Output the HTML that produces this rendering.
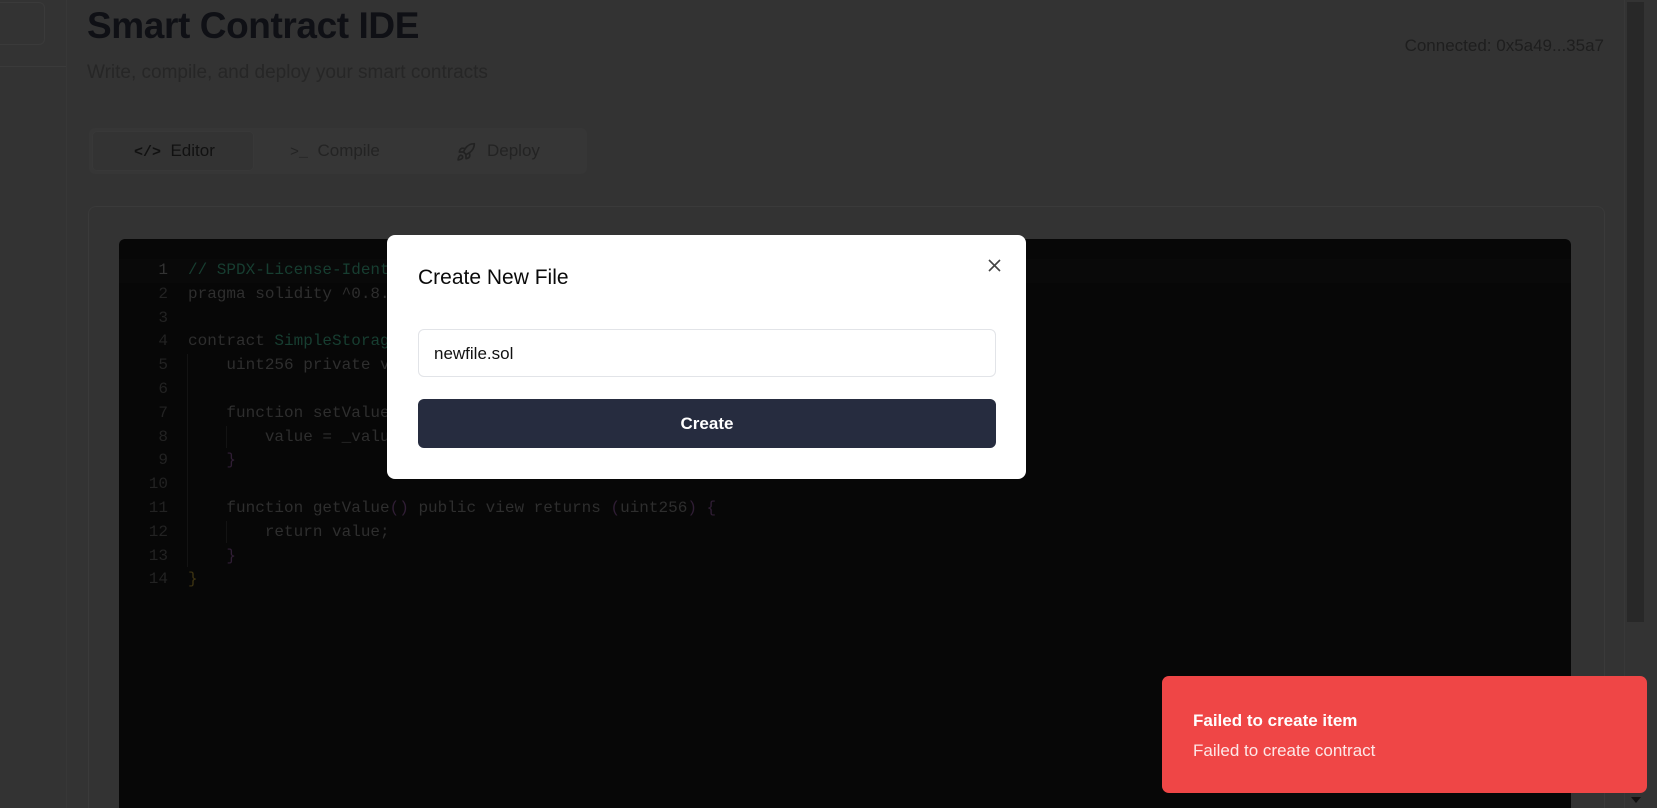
<!DOCTYPE html>
<html><head><meta charset="utf-8"><style>
*{box-sizing:border-box;margin:0;padding:0}
html,body{width:1657px;height:808px;overflow:hidden;background:#333;font-family:"Liberation Sans",sans-serif}
#w{position:relative;width:1657px;height:808px;overflow:hidden;background:#333}
.abs{position:absolute}
.code{font-family:"Liberation Mono",monospace;font-size:16px;line-height:23.8px;white-space:pre}
</style></head><body><div id="w">
<!-- sidebar -->
<div class="abs" style="left:0;top:2px;width:45px;height:43px;border:1px solid #3a3a3a;border-left:none;border-radius:0 6px 6px 0"></div>
<div class="abs" style="left:0;top:66px;width:66px;height:1px;background:#3a3a3a"></div>
<div class="abs" style="left:66px;top:0;width:1px;height:808px;background:#373737"></div>

<div class="abs" style="left:87px;top:5px;font-size:37px;font-weight:bold;color:#0f1015;letter-spacing:-0.4px">Smart Contract IDE</div>
<div class="abs" style="left:87px;top:62px;font-size:19px;color:#262626">Write, compile, and deploy your smart contracts</div>
<div class="abs" style="right:53px;top:36px;font-size:17px;color:#1e1e1e">Connected: 0x5a49...35a7</div>

<!-- tabs -->
<div class="abs" style="left:89px;top:128px;width:498px;height:46px;background:#363636;border-radius:6px"></div>
<div class="abs" style="left:92px;top:131px;width:162px;height:40px;background:#333;border-radius:5px;border:1px solid #383838"></div>
<div class="abs" style="left:134px;top:141px;font-size:17px;color:#111"><span style="font-family:'Liberation Mono';font-size:15px;font-weight:bold">&lt;/&gt;</span>&nbsp; Editor</div>
<div class="abs" style="left:290px;top:141px;font-size:17px;color:#232323"><span style="font-family:'Liberation Mono';font-size:15px">&gt;_</span>&nbsp; Compile</div>
<svg class="abs" style="left:456px;top:142px" width="20" height="20" viewBox="0 0 24 24" fill="none" stroke="#222" stroke-width="2" stroke-linecap="round" stroke-linejoin="round"><path d="M4.5 16.5c-1.5 1.26-2 5-2 5s3.74-.5 5-2c.71-.84.7-2.13-.09-2.91a2.180 2.18 0 0 0-2.91-.09z"/><path d="M12 15l-3-3a22 22 0 0 1 2-3.95A12.88 12.88 0 0 1 22 2c0 2.72-.78 7.5-6 11a22.35 22.35 0 0 1-4 2z"/><path d="M9 12H4s.55-3.030 2-4c1.62-1.08 5 0 5 0M12 15v5s3.03-.55 4-2c1.08-1.62 0-5 0-5"/></svg>
<div class="abs" style="left:487px;top:141px;font-size:17px;color:#232323">Deploy</div>

<!-- card -->
<div class="abs" style="left:88px;top:206px;width:1517px;height:602px;border:1px solid #3a3a3a;border-bottom:none;border-radius:8px 8px 0 0"></div>
<div class="abs" style="left:119px;top:239px;width:1452px;height:569px;background:#070707;border-radius:6px 6px 0 0"></div>
<div class="abs" style="left:119px;top:259px;width:1452px;height:24px;background:#090909"></div>
<div class="abs" style="left:187px;top:354px;width:1px;height:213px;background:#131313"></div>
<div class="abs" style="left:226px;top:426px;width:1px;height:22px;background:#131313"></div>
<div class="abs" style="left:226px;top:521px;width:1px;height:22px;background:#131313"></div>
<div class="abs code" style="left:140px;top:259px;width:28px;text-align:right;color:#222"><span style="color:#333">1</span>
2
3
4
5
6
7
8
9
10
11
12
13
14</div>
<div class="abs code" style="left:188px;top:259px;color:#2e2e2e"><span style="color:#173e31">// SPDX-License-Identifier: MIT</span>
pragma solidity ^0.8.0;

contract <span style="color:#173e31">SimpleStorage</span> <span style="color:#3e3412">{</span>
    uint256 private value;

    function setValue<span style="color:#301e35">(</span>uint256 _value<span style="color:#301e35">)</span> public <span style="color:#301e35">{</span>
        value = _value;
    <span style="color:#301e35">}</span>

    function getValue<span style="color:#301e35">()</span> public view returns <span style="color:#301e35">(</span>uint256<span style="color:#301e35">)</span> <span style="color:#301e35">{</span>
        return value;
    <span style="color:#301e35">}</span>
<span style="color:#3e3412">}</span></div>

<!-- scrollbar -->
<div class="abs" style="left:1624px;top:0;width:33px;height:808px;background:#333;border-left:1px solid #383838"></div>
<div class="abs" style="left:1627px;top:2px;width:17px;height:620px;background:#282828"></div>
<div class="abs" style="left:1631px;top:797px;width:0;height:0;border-left:5px solid transparent;border-right:5px solid transparent;border-top:6px solid #111"></div>

<!-- modal -->
<div class="abs" style="left:387px;top:235px;width:639px;height:244px;background:#fff;border-radius:8px"></div>
<div class="abs" style="left:418px;top:266px;font-size:21px;color:#0a0a0a">Create New File</div>
<svg class="abs" style="left:988px;top:259px" width="13" height="13" viewBox="0 0 13 13" stroke="#444" stroke-width="1.6"><path d="M1 1L12 12M12 1L1 12"/></svg>
<div class="abs" style="left:418px;top:329px;width:578px;height:48px;border:1px solid #e2e4e8;border-radius:6px"></div>
<div class="abs" style="left:434px;top:344px;font-size:17px;color:#111">newfile.sol</div>
<div class="abs" style="left:418px;top:399px;width:578px;height:49px;background:#262c3f;border-radius:6px;color:#fff;font-size:17px;font-weight:bold;text-align:center;line-height:49px">Create</div>

<!-- toast -->
<div class="abs" style="left:1162px;top:676px;width:485px;height:117px;background:#ef4646;border-radius:7px"></div>
<div class="abs" style="left:1193px;top:711px;font-size:17px;font-weight:bold;color:#fff">Failed to create item</div>
<div class="abs" style="left:1193px;top:741px;font-size:17px;color:#fde8e8">Failed to create contract</div>
</div></body></html>
